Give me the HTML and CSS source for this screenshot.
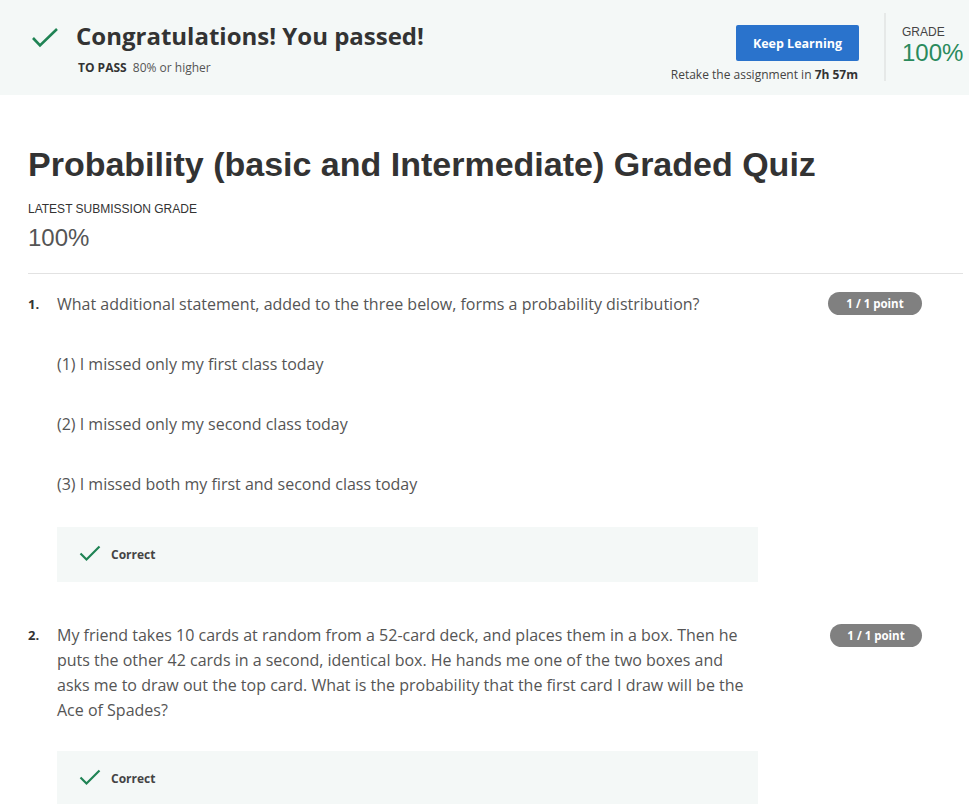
FILE: index.html
```html
<!DOCTYPE html>
<html lang="en">
<head>
<meta charset="utf-8">
<title>Probability Graded Quiz</title>
<link rel="stylesheet" href="styles.css">
</head>
<body>
<header class="banner">
  <div class="banner-left">
    <svg class="pass-check" width="28" height="22" viewBox="0 0 28 22"><polyline points="2,11 9,18.5 26,2" fill="none" stroke="#1f8354" stroke-width="2.6"/></svg>
    <div class="pass-text">
      <h2 class="pass-title">Congratulations! You passed!</h2>
      <div class="pass-req"><span class="req-label">TO PASS</span> 80% or higher</div>
    </div>
  </div>
  <div class="banner-actions">
    <button class="keep-btn">Keep Learning</button>
    <div class="retake">Retake the assignment in <b>7h 57m</b></div>
  </div>
  <div class="banner-grade">
    <div class="grade-label">GRADE</div>
    <div class="grade-value">100%</div>
  </div>
</header>

<main class="content">
  <h1 class="quiz-title">Probability (basic and Intermediate) Graded Quiz</h1>
  <div class="latest-label">LATEST SUBMISSION GRADE</div>
  <div class="latest-value">100%</div>
  <hr class="divider">

  <section class="question q1">
    <div class="q-head">
      <span class="q-num">1.</span>
      <p class="q-text">What additional statement, added to the three below, forms a probability distribution?</p>
      <span class="points">1 / 1 point</span>
    </div>
    <div class="q-body">
      <p class="option">(1) I missed only my first class today</p>
      <p class="option">(2) I missed only my second class today</p>
      <p class="option">(3) I missed both my first and second class today</p>
      <div class="feedback">
        <svg class="fb-check" width="22" height="17" viewBox="0 0 22 17"><polyline points="1.5,8.5 7.5,14.5 20.5,1.5" fill="none" stroke="#1f8354" stroke-width="2.2"/></svg>
        <span class="fb-text">Correct</span>
      </div>
    </div>
  </section>

  <section class="question q2">
    <div class="q-head">
      <span class="q-num">2.</span>
      <p class="q-text">My friend takes 10 cards at random from a 52-card deck, and places them in a box. Then he puts the other 42 cards in a second, identical box. He hands me one of the two boxes and asks me to draw out the top card. What is the probability that the first card I draw will be the Ace of Spades?</p>
      <span class="points">1 / 1 point</span>
    </div>
    <div class="q-body">
      <div class="feedback">
        <svg class="fb-check" width="22" height="17" viewBox="0 0 22 17"><polyline points="1.5,8.5 7.5,14.5 20.5,1.5" fill="none" stroke="#1f8354" stroke-width="2.2"/></svg>
        <span class="fb-text">Correct</span>
      </div>
    </div>
  </section>
</main>
</body>
</html>
```

FILE: styles.css
```css
* { box-sizing: border-box; }
html, body { margin: 0; padding: 0; background: #fff; }
body {
  font-family: "Open Sans", "Liberation Sans", sans-serif;
  color: #333;
  width: 969px;
  overflow: hidden;
}

.banner {
  background: #f4f8f7;
  height: 95px;
  display: flex;
  align-items: flex-start;
}
.banner-left {
  display: flex;
  align-items: flex-start;
  padding: 24px 0 0 31px;
  flex: 1;
}
.pass-check { margin-top: 3px; }
.pass-text { margin-left: 17px; }
.pass-title {
  margin: 0;
  font-size: 24px;
  font-weight: 700;
  line-height: 24px;
  color: #333;
}
.pass-req {
  margin-top: 13px;
  margin-left: 2px;
  font-size: 12px;
  color: #555;
  line-height: 14px;
}
.req-label { font-weight: 700; color: #333; margin-right: 3px; }

.banner-actions {
  display: flex;
  flex-direction: column;
  align-items: flex-end;
  padding-top: 25px;
  margin-right: 25px;
}
.keep-btn {
  width: 123px;
  height: 36px;
  background: #2a73cc;
  color: #fff;
  border: none;
  border-radius: 2px;
  font-family: "Open Sans", sans-serif;
  font-weight: 700;
  font-size: 12.5px;
  padding: 0;
}
.retake {
  margin-top: 6px;
  font-size: 12px;
  color: #444;
  line-height: 16px;
  margin-right: 1px;
}
.retake b { color: #333; }

.banner-grade {
  border-left: 2px solid #e6e9e8;
  margin-top: 13px;
  height: 68px;
  width: 85px;
  padding-left: 16px;
  padding-top: 12px;
}
.grade-label {
  font-family: "Liberation Sans", Arial, sans-serif;
  font-size: 12px;
  color: #444;
  line-height: 14px;
}
.grade-value {
  font-family: "Liberation Sans", Arial, sans-serif;
  font-size: 24px;
  color: #2a8a5c;
  line-height: 28px;
}

.content {
  padding: 0 6px 0 28px;
}
.quiz-title {
  font-family: "Liberation Sans", Arial, sans-serif;
  font-weight: 700;
  font-size: 34px;
  color: #333;
  margin: 49px 0 0 0;
  line-height: 40px;
}
.latest-label {
  font-family: "Liberation Sans", Arial, sans-serif;
  font-size: 12px;
  color: #333;
  margin-top: 18px;
  line-height: 14px;
}
.latest-value {
  font-family: "Liberation Sans", Arial, sans-serif;
  font-size: 24px;
  color: #555;
  margin-top: 9px;
  line-height: 26px;
}
.divider {
  border: none;
  border-top: 1px solid #e2e2e2;
  margin: 22px 0 0 0;
}

.q1 { padding-top: 18px; }
.q2 { padding-top: 41px; }
.q-head {
  display: flex;
  align-items: flex-start;
}
.q-num {
  width: 29px;
  font-size: 13px;
  font-weight: 700;
  color: #333;
  line-height: 25px;
}
.q-text {
  margin: 0;
  width: 700px;
  font-size: 16px;
  color: #555;
  line-height: 25px;
}
.points {
  margin-left: 71px;
  margin-top: 0;
  background: #808080;
  color: #fff;
  font-weight: 700;
  font-size: 11.5px;
  border-radius: 12px;
  width: 94px;
  height: 23px;
  line-height: 23px;
  text-align: center;
  flex-shrink: 0;
}
.q2 .points { margin-left: 73px; width: 92px; margin-top: 1px; }

.q-body { padding-left: 29px; }
.option {
  margin: 35px 0 0 0;
  font-size: 16px;
  color: #555;
  line-height: 25px;
}
.feedback {
  margin-top: 30px;
  width: 701px;
  height: 55px;
  background: #f4f8f7;
  display: flex;
  align-items: center;
  padding-left: 22px;
}
.q2 .feedback { margin-top: 28px; }
.fb-check { margin-top: -2px; }
.fb-text {
  margin-left: 10px;
  font-size: 12px;
  font-weight: 700;
  color: #444;
}
```
